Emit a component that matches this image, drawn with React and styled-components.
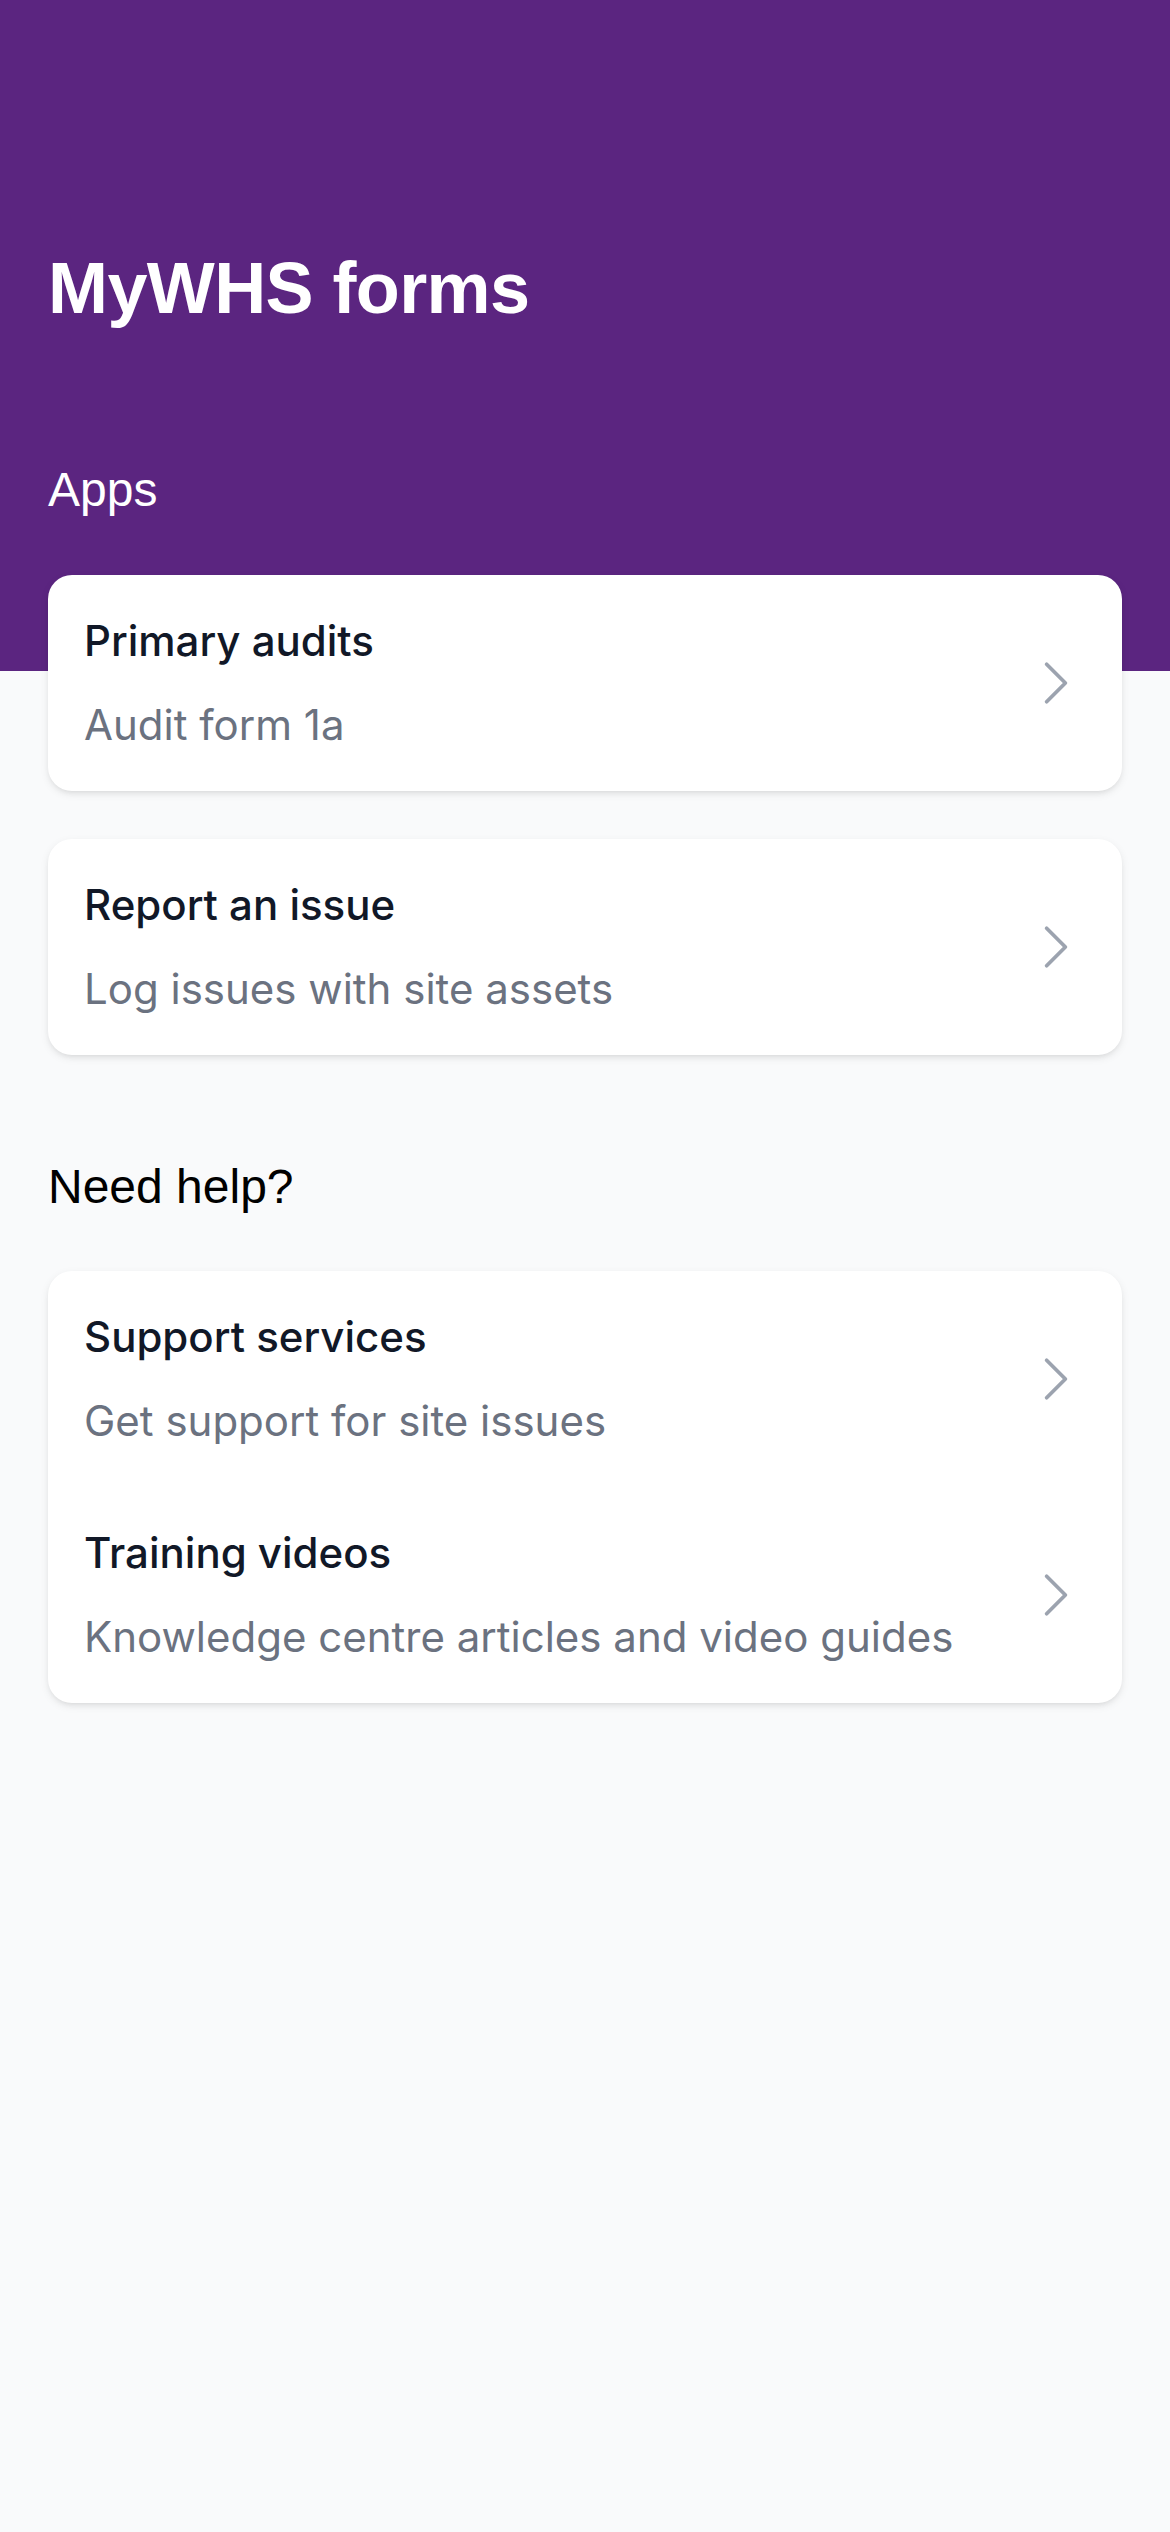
import React from "react";
import styled, { createGlobalStyle } from "styled-components";

const GlobalStyle = createGlobalStyle`
  html, body { margin: 0; padding: 0; }
  body {
    background: #f9fafb;
    font-family: Inter, "Noto Sans", "Liberation Sans", sans-serif;
    -webkit-font-smoothing: antialiased;
  }
  * { box-sizing: border-box; }
`;

const Page = styled.div`
  min-height: 2532px;
  background: #f9fafb;
`;

const Header = styled.header`
  background: #5b2580;
  padding: 240px 48px 145px;
  display: flex;
  flex-direction: column;
`;

const Title = styled.h1`
  margin: 0;
  color: #ffffff;
  font-family: "Liberation Sans", Arial, Helvetica, sans-serif;
  font-size: 72px;
  line-height: 96px;
  font-weight: 700;
  letter-spacing: -0.6px;
`;

const SectionLabel = styled.h2`
  margin: ${(p) => p.$top || 0}px 0 0;
  color: ${(p) => (p.$light ? "#ffffff" : "#000000")};
  font-family: "Liberation Sans", Arial, Helvetica, sans-serif;
  font-size: 48px;
  line-height: 72px;
  font-weight: 400;
`;

const Main = styled.main`
  margin-top: -96px;
  padding: 0 48px 48px;
  display: flex;
  flex-direction: column;
  gap: 48px;
`;

const Card = styled.div`
  background: #ffffff;
  border-radius: 24px;
  box-shadow: 0 3px 9px 0 rgba(0, 0, 0, 0.08), 0 3px 6px -3px rgba(0, 0, 0, 0.1);
  display: flex;
  flex-direction: column;
`;

const Row = styled.a`
  display: flex;
  align-items: center;
  justify-content: space-between;
  padding: 36px;
  text-decoration: none;
  cursor: pointer;
`;

const Texts = styled.div`
  display: flex;
  flex-direction: column;
  gap: 24px;
`;

const RowTitle = styled.div`
  color: #111827;
  font-size: 42px;
  line-height: 60px;
  font-weight: 500;
`;

const RowSub = styled.div`
  color: #6b7280;
  font-size: 42px;
  line-height: 60px;
  font-weight: 400;
`;

const Chevron = () => (
  <svg width="60" height="60" viewBox="0 0 24 24" fill="none" stroke="#9ca3af" strokeWidth="1.5" strokeLinecap="round" strokeLinejoin="round">
    <path d="M8.25 4.5l7.5 7.5-7.5 7.5" />
  </svg>
);

const Item = ({ title, sub }) => (
  <Row>
    <Texts>
      <RowTitle>{title}</RowTitle>
      <RowSub>{sub}</RowSub>
    </Texts>
    <Chevron />
  </Row>
);

export default function App() {
  return (
    <Page>
      <GlobalStyle />
      <Header>
        <Title>MyWHS forms</Title>
        <SectionLabel $light $top={118}>Apps</SectionLabel>
      </Header>
      <Main>
        <Card>
          <Item title="Primary audits" sub="Audit form 1a" />
        </Card>
        <Card>
          <Item title="Report an issue" sub="Log issues with site assets" />
        </Card>
        <SectionLabel $top={48}>Need help?</SectionLabel>
        <Card>
          <Item title="Support services" sub="Get support for site issues" />
          <Item title="Training videos" sub="Knowledge centre articles and video guides" />
        </Card>
      </Main>
    </Page>
  );
}
